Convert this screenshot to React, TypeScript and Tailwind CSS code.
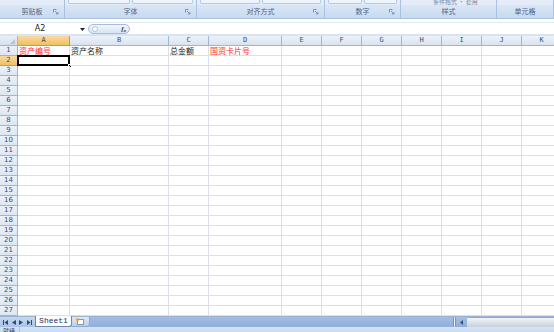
import React from "react";

const cols = [
  { id: "A", w: 52 },
  { id: "B", w: 99 },
  { id: "C", w: 40 },
  { id: "D", w: 73 },
  { id: "E", w: 40 },
  { id: "F", w: 40 },
  { id: "G", w: 40 },
  { id: "H", w: 40 },
  { id: "I", w: 40 },
  { id: "J", w: 40 },
  { id: "K", w: 40 },
];

const groups = [
  { name: "剪贴板", w: 65, launcher: true },
  { name: "字体", w: 132, launcher: true },
  { name: "对齐方式", w: 128, launcher: true },
  { name: "数字", w: 76, launcher: true },
  { name: "样式", w: 96, launcher: false },
  { name: "单元格", w: 57, launcher: false },
];

const row1: Record<string, { text: string; red?: boolean }> = {
  A: { text: "资产编号", red: true },
  B: { text: "资产名称" },
  C: { text: "总金额" },
  D: { text: "国资卡片号", red: true },
};

const cjk = "font-['Noto_Sans_CJK_SC','Noto_Sans',sans-serif]";

function Launcher() {
  return (
    <svg width="6" height="6" viewBox="0 0 6 6" className="absolute right-[5px] top-[4px]">
      <path d="M0.5 0.5h3M0.5 0.5v3" stroke="#7d93b5" strokeWidth="1" fill="none" />
      <path d="M2 2l3 3M5 3v2h-2" stroke="#7d93b5" strokeWidth="1" fill="none" />
    </svg>
  );
}

function Ribbon() {
  return (
    <div className="flex h-[19px] shrink-0 bg-[#d3e1f3] border-b border-[#a9c0df]">
      {groups.map((g, i) => (
        <div
          key={g.name}
          className="relative flex flex-col border-r border-[#aac2e2]"
          style={{ width: g.w }}
        >
          <div className="relative h-[5px] bg-[#e3ecf8] flex gap-[2px] px-[3px]">
            {i > 0 && i < 4 && (
              <>
                <div className="flex-1 h-[4px] border-b border-x border-[#b6c9e3] rounded-b-[2px] bg-[#eef4fb]" />
                <div className="flex-1 h-[4px] border-b border-x border-[#b6c9e3] rounded-b-[2px] bg-[#eef4fb]" />
              </>
            )}
            {i === 4 && (
              <div className="absolute left-[32px] top-0 h-[5px] flex items-end text-[6px] leading-[6px] text-[#7a8aa2] whitespace-nowrap">
                条件格式 · 套用
              </div>
            )}
          </div>
          <div className="relative flex-1 flex items-center justify-center text-[7px] text-[#4f6384] bg-gradient-to-b from-[#d9e6f5] to-[#c9daf0]">
            <span className="leading-none">{g.name}</span>
            {g.launcher && <Launcher />}
          </div>
        </div>
      ))}
    </div>
  );
}

function FormulaBar() {
  return (
    <div className="flex h-[15px] shrink-0 bg-white items-end">
      <div className="flex h-[12px] w-full border-t border-[#dfe8f3]">
        <div className="relative w-[88px] flex items-center justify-center text-[8px] text-[#222] font-['DejaVu_Sans',sans-serif]">
          <span className="mr-[8px]">A2</span>
          <svg width="5" height="3" viewBox="0 0 5 3" className="absolute right-[3px] top-[5px]">
            <path d="M0 0h5L2.5 3z" fill="#222" />
          </svg>
        </div>
        <div className="w-[42px] h-[10px] mt-[1px] rounded-full border border-[#a8bcd8] bg-gradient-to-b from-[#f1f6fc] to-[#d6e3f3] flex items-center justify-between px-[3px]">
          <div className="w-[6px] h-[6px] rounded-full border border-[#b7c6db] bg-white" />
          <span className="text-[7px] italic font-bold text-[#333] font-['Liberation_Serif',serif] leading-none">
            f<sub className="text-[5px]">x</sub>
          </span>
        </div>
        <div className="flex-1 bg-white" />
      </div>
    </div>
  );
}

function HeaderRow() {
  return (
    <div className="flex h-[10px] shrink-0 font-['DejaVu_Sans_Mono',monospace] text-[7px] text-[#3b4d6d]">
      <div className="relative w-[18px] shrink-0 bg-gradient-to-b from-[#e9eff8] to-[#d5e0ee] border-r border-b border-[#9eb6ce]">
        <svg width="5" height="5" viewBox="0 0 5 5" className="absolute right-[2px] bottom-[1px]">
          <path d="M5 0V5H0z" fill="#b4c4d9" />
        </svg>
      </div>
      {cols.map((c) => (
        <div
          key={c.id}
          className={`shrink-0 flex items-center justify-center border-r border-b leading-none ${
            c.id === "A"
              ? "bg-gradient-to-b from-[#f9d99f] to-[#f1c15f] border-[#c29b5a]"
              : "bg-gradient-to-b from-[#edf2f9] to-[#d9e3f0] border-[#9eb6ce]"
          }`}
          style={{ width: c.w }}
        >
          {c.id}
        </div>
      ))}
    </div>
  );
}

function Grid() {
  const rows = Array.from({ length: 27 }, (_, i) => i + 1);
  return (
    <div className="flex flex-col shrink-0">
      {rows.map((r) => (
        <div key={r} className="flex h-[10px]">
          <div
            className={`w-[18px] shrink-0 flex items-center justify-center border-r border-b text-[7px] leading-none font-['DejaVu_Sans',sans-serif] text-[#3b4d6d] ${
              r === 2
                ? "bg-gradient-to-b from-[#f9d99f] to-[#f1c15f] border-[#c29b5a]"
                : "bg-gradient-to-b from-[#edf2f9] to-[#dde6f1] border-[#9eb6ce]"
            }`}
          >
            {r}
          </div>
          {cols.map((c) => {
            const cell = r === 1 ? row1[c.id] : undefined;
            const selected = r === 2 && c.id === "A";
            return (
              <div
                key={c.id}
                className={`relative shrink-0 border-r border-b border-[#dadfe8] flex items-center px-[1px] overflow-visible whitespace-nowrap text-[8px] leading-none ${cjk} ${
                  cell?.red ? "text-[#ff1f1f]" : "text-[#1a1a1a]"
                }`}
                style={{ width: c.w }}
              >
                {cell?.text}
                {selected && (
                  <>
                    <div className="absolute left-[-1px] top-[-1px] right-[-1px] bottom-[-1px] border-2 border-black" />
                    <div className="absolute right-[-3px] bottom-[-3px] w-[4px] h-[4px] bg-black border border-white" />
                  </>
                )}
              </div>
            );
          })}
        </div>
      ))}
    </div>
  );
}

function TabBar() {
  return (
    <div className="flex h-[11px] shrink-0 bg-gradient-to-b from-[#c5d7ee] to-[#aac3e6] border-t border-[#9bb3d4]">
      <div className="w-[35px] flex items-center justify-around px-[1px]">
        <svg width="5" height="5" viewBox="0 0 5 5"><path d="M0 0h1v5H0zM5 0v5L1.5 2.5z" fill="#2c4a78" /></svg>
        <svg width="4" height="5" viewBox="0 0 4 5"><path d="M4 0v5L0 2.5z" fill="#2c4a78" /></svg>
        <svg width="4" height="5" viewBox="0 0 4 5"><path d="M0 0v5L4 2.5z" fill="#2c4a78" /></svg>
        <svg width="5" height="5" viewBox="0 0 5 5"><path d="M4 0h1v5H4zM0 0v5L3.5 2.5z" fill="#2c4a78" /></svg>
      </div>
      <div className="w-[37px] -mt-px h-[11px] bg-white border-x border-b border-[#6d87ad] rounded-br-[3px] flex items-center justify-center text-[8px] text-[#17335d] font-['Liberation_Mono',monospace] leading-none">
        Sheet1
      </div>
      <div className="w-[18px] h-[10px] bg-gradient-to-b from-[#dde8f6] to-[#bcd0ea] border-r border-b border-[#8ea8cc] rounded-br-[4px] flex items-center justify-center">
        <div className="relative w-[7px] h-[6px] bg-white border border-[#8b97a8]">
          <div className="absolute -left-[2px] -top-[2px] w-[3px] h-[3px] bg-[#f3a02b] rounded-full" />
        </div>
      </div>
      <div className="w-[363px] bg-gradient-to-b from-[#a3bde2] to-[#8fb0db]" />
      <div className="w-[3px] bg-[#e9f0f9] border-x border-[#7d97bc]" />
      <div className="w-[11px] flex items-center justify-center bg-gradient-to-b from-[#a6bfe2] to-[#8eaddb]">
        <svg width="3" height="5" viewBox="0 0 3 5"><path d="M3 0v5L0 2.5z" fill="#34507a" /></svg>
      </div>
      <div className="flex-1 bg-gradient-to-b from-[#f3f5f8] to-[#c9d1dd] border-t border-[#9aa8bb]" />
    </div>
  );
}

function StatusBar() {
  return (
    <div className="flex flex-1 bg-gradient-to-b from-[#d5e3f4] to-[#c3d7ef] items-start">
      <div className={`w-[20px] h-full border-r border-[#a9c0df] text-[6px] leading-[7px] text-[#33425c] pl-[3px] ${cjk}`}>
        就绪
      </div>
    </div>
  );
}

export default function App() {
  return (
    <div className={`w-[554px] h-[332px] overflow-hidden bg-white flex flex-col ${cjk}`}>
      <Ribbon />
      <FormulaBar />
      <div className="h-[2px] shrink-0 bg-[#d9e4f2]" />
      <HeaderRow />
      <Grid />
      <TabBar />
      <StatusBar />
    </div>
  );
}
